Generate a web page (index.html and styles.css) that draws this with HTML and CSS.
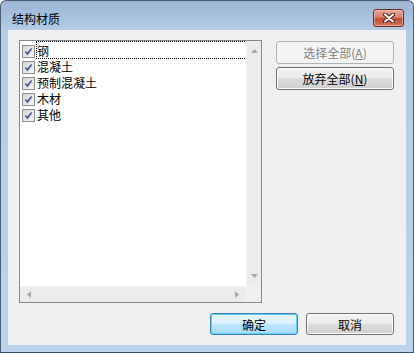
FILE: index.html
```html
<!DOCTYPE html>
<html lang="zh-CN">

<head>
    <meta charset="UTF-8">
    <title>结构材质</title>
    <link rel="stylesheet" href="styles.css">
</head>

<body>
    <div class="window">
        <div class="titlebar">
            <span class="title">结构材质</span>
            <button class="close">
                <svg width="14" height="10" viewBox="0 0 14 10">
                    <path d="M3 1.5 L11 8.5 M11 1.5 L3 8.5" stroke="#4a241c" stroke-width="4" stroke-linecap="round" />
                    <path d="M3 1.5 L11 8.5 M11 1.5 L3 8.5" stroke="#fff" stroke-width="2" stroke-linecap="round" />
                </svg>
            </button>
        </div>
        <div class="client">
            <div class="main">
                <div class="listbox">
                    <div class="list-area">
                        <div class="items">
                            <div class="item">
                                <span class="check"><svg width="11" height="11" viewBox="0 0 11 11"><path d="M2.5 5.5 L4.5 8 L8.5 2.5" fill="none" stroke="#4b5f9e" stroke-width="1.8" /></svg></span>
                                <span class="label focus">钢</span>
                            </div>
                            <div class="item">
                                <span class="check"><svg width="11" height="11" viewBox="0 0 11 11"><path d="M2.5 5.5 L4.5 8 L8.5 2.5" fill="none" stroke="#4b5f9e" stroke-width="1.8" /></svg></span>
                                <span class="label">混凝土</span>
                            </div>
                            <div class="item">
                                <span class="check"><svg width="11" height="11" viewBox="0 0 11 11"><path d="M2.5 5.5 L4.5 8 L8.5 2.5" fill="none" stroke="#4b5f9e" stroke-width="1.8" /></svg></span>
                                <span class="label">预制混凝土</span>
                            </div>
                            <div class="item">
                                <span class="check"><svg width="11" height="11" viewBox="0 0 11 11"><path d="M2.5 5.5 L4.5 8 L8.5 2.5" fill="none" stroke="#4b5f9e" stroke-width="1.8" /></svg></span>
                                <span class="label">木材</span>
                            </div>
                            <div class="item">
                                <span class="check"><svg width="11" height="11" viewBox="0 0 11 11"><path d="M2.5 5.5 L4.5 8 L8.5 2.5" fill="none" stroke="#4b5f9e" stroke-width="1.8" /></svg></span>
                                <span class="label">其他</span>
                            </div>
                        </div>
                        <div class="vscroll">
                            <svg width="7" height="4" viewBox="0 0 7 4"><path d="M0 4 L3.5 0 L7 4 Z" fill="#a9a9a9" /></svg>
                            <svg width="7" height="4" viewBox="0 0 7 4"><path d="M0 0 L3.5 4 L7 0 Z" fill="#a9a9a9" /></svg>
                        </div>
                    </div>
                    <div class="hscroll-row">
                        <div class="hscroll">
                            <svg width="4" height="7" viewBox="0 0 4 7"><path d="M4 0 L0 3.5 L4 7 Z" fill="#a9a9a9" /></svg>
                            <svg width="4" height="7" viewBox="0 0 4 7"><path d="M0 0 L4 3.5 L0 7 Z" fill="#a9a9a9" /></svg>
                        </div>
                        <div class="corner"></div>
                    </div>
                </div>
                <div class="side">
                    <button class="btn" disabled>选择全部(<u>A</u>)</button>
                    <button class="btn">放弃全部(<u>N</u>)</button>
                </div>
            </div>
            <div class="footer">
                <button class="btn default">确定</button>
                <button class="btn">取消</button>
            </div>
        </div>
    </div>
</body>

</html>
```

FILE: styles.css
```css
* {
    margin: 0;
    padding: 0;
    box-sizing: border-box;
}

body {
    background: #fff;
    font-family: "Noto Sans CJK SC", "Liberation Sans", sans-serif;
    font-size: 12px;
    color: #000;
}

.window {
    width: 414px;
    height: 353px;
    display: flex;
    flex-direction: column;
    border: 1px solid #4b5d70;
    border-bottom-color: #2e5666;
    border-radius: 6px 6px 0 0;
    background: linear-gradient(#9ab5d3 0, #b4cce6 30px, #bcd3eb 100%);
}

.titlebar {
    height: 29px;
    display: flex;
    align-items: flex-start;
    justify-content: space-between;
    padding: 0 9px 0 11px;
}

.title {
    margin-top: 10px;
    line-height: 16px;
    font-size: 12px;
}

.close {
    margin-top: 8px;
    width: 31px;
    height: 18px;
    display: flex;
    align-items: center;
    justify-content: center;
    border: 1px solid #6e2a1f;
    border-radius: 3px;
    background: linear-gradient(#e8a898 0%, #d7806b 45%, #c24a33 55%, #d3775f 100%);
    box-shadow: inset 0 0 0 1px rgba(255, 220, 210, 0.45);
}

.client {
    flex: 1;
    margin: 0 7px 7px 7px;
    background: #f0f0f0;
    padding: 10px 12px 10px 11px;
    display: flex;
    flex-direction: column;
}

.main {
    display: flex;
    gap: 14px;
}

.listbox {
    width: 243px;
    height: 263px;
    border: 1px solid #828790;
    background: #fff;
    display: flex;
    flex-direction: column;
}

.list-area {
    flex: 1;
    display: flex;
}

.items {
    flex: 1;
    padding-top: 1px;
}

.item {
    height: 16px;
    display: flex;
    align-items: flex-start;
}

.check {
    width: 13px;
    height: 13px;
    margin: 3px 2px 0 2px;
    display: flex;
    align-items: center;
    justify-content: center;
    border: 1px solid #8e8f8f;
    background: linear-gradient(135deg, #d5d5d5, #f7f7f7);
}

.label {
    flex: 1;
    height: 16px;
    line-height: 16px;
    padding-top: 1px;
}

.focus {
    outline: 1px dotted #000;
}

.vscroll {
    width: 15px;
    display: flex;
    flex-direction: column;
    justify-content: space-between;
    align-items: center;
    padding: 8px 0 8px 1px;
    background: #ececec;
    border-left: 1px solid #f4f4f4;
}

.hscroll-row {
    height: 16px;
    display: flex;
}

.hscroll {
    flex: 1;
    display: flex;
    justify-content: space-between;
    align-items: center;
    padding: 0 7px 0 7px;
    background: #ececec;
    border-top: 1px solid #f4f4f4;
}

.corner {
    width: 15px;
    background: #f0f0f0;
}

.side {
    display: flex;
    flex-direction: column;
    gap: 3px;
    padding-top: 1px;
}

.btn {
    width: 118px;
    height: 23px;
    font-family: inherit;
    font-size: 12px;
    color: #000;
    border: 1px solid #707070;
    border-radius: 3px;
    background: linear-gradient(#f2f2f2 0%, #ebebeb 50%, #dddddd 50%, #cfcfcf 100%);
    box-shadow: inset 0 0 0 1px #fcfcfc;
}

.btn u {
    text-underline-offset: 1px;
}

.btn:disabled {
    color: #838383;
    border-color: #adb2b5;
    background: #f4f4f4;
    box-shadow: none;
}

.footer {
    margin-top: 10px;
    display: flex;
    justify-content: flex-end;
    gap: 8px;
}

.footer .btn {
    width: 88px;
    height: 22px;
}

.btn.default {
    border-color: #3c7fb1;
    background: linear-gradient(#eaf6fd 0%, #d9f0fc 50%, #bee6fd 50%, #a7d9f5 100%);
    box-shadow: inset 0 0 0 1px #5fd0fb;
}
```
